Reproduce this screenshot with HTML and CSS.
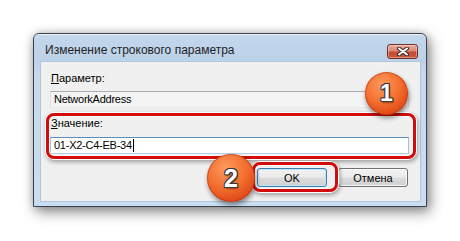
FILE: index.html
```html
<!DOCTYPE html>
<html lang="ru">
<head>
<meta charset="utf-8">
<title>Изменение строкового параметра</title>
<link rel="stylesheet" href="styles.css">
</head>
<body>
<div class="window">
  <div class="titlebar">
    <span class="title">Изменение строкового параметра</span>
    <button class="close" aria-label="Закрыть">
      <svg width="12" height="9" viewBox="0 0 12 9">
        <path d="M2 1.5 L10 7.5 M10 1.5 L2 7.5" stroke="#3b2a28" stroke-width="4" stroke-linecap="round"/>
        <path d="M2 1.5 L10 7.5 M10 1.5 L2 7.5" stroke="#ffffff" stroke-width="2" stroke-linecap="round"/>
      </svg>
    </button>
  </div>
  <div class="content">
    <div class="label"><u>П</u>араметр:</div>
    <div class="field readonly">NetworkAddress</div>
    <div class="label label2"><u>З</u>начение:</div>
    <div class="field edit">01-X2-C4-EB-34<span class="caret"></span></div>
    <div class="buttons">
      <button class="btn default">OK</button>
      <button class="btn">Отмена</button>
    </div>
  </div>
  <div class="mark frame1"></div>
  <div class="mark frame2"></div>
  <div class="badge badge1">1</div>
  <div class="badge badge2">2</div>
</div>
</body>
</html>
```

FILE: styles.css
```css
html, body {
  margin: 0;
  padding: 0;
  background: #ffffff;
}
body {
  width: 460px;
  height: 241px;
  overflow: hidden;
  font-family: "Liberation Sans", Arial, sans-serif;
}
.window {
  position: relative;
  box-sizing: border-box;
  margin: 33px 0 0 33px;
  width: 394px;
  height: 174px;
  border: 1px solid #39424d;
  border-radius: 6px 6px 0 0;
  padding: 0 6px 5px 7px;
  background: linear-gradient(#c3d7ec 0px, #bcd2e9 26px, #c6daee 40px, #cadef1 100%);
  box-shadow: 3px 5px 14px rgba(0,0,0,0.45), 0 0 8px rgba(0,0,0,0.18), inset 0 1px 0 rgba(255,255,255,0.7);
  display: flex;
  flex-direction: column;
}
.titlebar {
  height: 28px;
  box-sizing: border-box;
  padding: 9px 2px 0 4px;
  display: flex;
  justify-content: space-between;
  align-items: flex-start;
}
.title {
  font-size: 12px;
  line-height: 15px;
  color: #1e1e1e;
}
.close {
  margin-top: 1px;
  width: 31px;
  height: 15px;
  padding: 0;
  border: 1px solid #6e3228;
  border-radius: 3px;
  background: linear-gradient(#e9a99c 0%, #dc8a78 45%, #c54a32 55%, #c9573c 100%);
  box-shadow: inset 0 0 0 1px rgba(255,255,255,0.35);
  display: flex;
  align-items: center;
  justify-content: center;
}
.close svg { display: block; }
.content {
  flex: 1;
  background: #f0f0f0;
  box-shadow: 0 0 0 1px #b2c6db;
  padding: 9px 11px 0 9px;
  display: flex;
  flex-direction: column;
  font-size: 11px;
  color: #000;
}
.label {
  height: 15px;
  line-height: 15px;
  padding-left: 1px;
}
.label u { text-decoration: underline; text-underline-offset: 1px; }
.field {
  box-sizing: border-box;
  margin-top: 5px;
  height: 17px;
  line-height: 15px;
  padding-left: 3px;
  letter-spacing: -0.25px;
  border: 1px solid;
  display: flex;
  align-items: center;
}
.readonly {
  background: #f3f3f3;
  border-color: #abadb3 #dcdfe5 #e3e9ef #dcdfe5;
}
.label2 { margin-top: 8px; }
.edit {
  margin-top: 6px;
  background: #ffffff;
  border-color: #5b8dbc #a4c0da #b9d1e6 #a4c0da;
}
.caret {
  display: inline-block;
  width: 1px;
  height: 13px;
  background: #000;
  margin-left: 1px;
}
.buttons {
  margin-top: 14px;
  display: flex;
  justify-content: flex-end;
  gap: 11px;
  padding-right: 1px;
}
.btn {
  width: 70px;
  height: 19px;
  padding: 0;
  font-family: "Liberation Sans", Arial, sans-serif;
  font-size: 11px;
  color: #000;
  border: 1px solid #707070;
  border-radius: 3px;
  background: linear-gradient(#f2f2f2 0%, #ebebeb 48%, #dddddd 52%, #cfcfcf 100%);
  box-shadow: inset 0 0 0 1px rgba(255,255,255,0.8);
}
.btn.default {
  border-color: #3c7fb1;
  box-shadow: inset 0 0 0 1px #c4e5f6;
}
.mark {
  position: absolute;
  box-sizing: border-box;
  border: 3px solid #d20c0c;
  border-radius: 8px;
  box-shadow: inset 0 0 0 1px rgba(255,255,255,0.85), 0 0 0 1px #ffffff, 1px 2px 4px 1px rgba(0,0,0,0.35);
}
.frame1 {
  left: 12px;
  top: 79px;
  width: 370px;
  height: 46px;
}
.frame2 {
  left: 218px;
  top: 128px;
  width: 86px;
  height: 30px;
}
.badge {
  position: absolute;
  border-radius: 50%;
  background: radial-gradient(circle at 40% 30%, #fb9a5e 0%, #f4702f 45%, #dc4416 80%, #c83a12 100%);
  box-shadow: 1px 3px 5px rgba(0,0,0,0.45), inset 0 0 0 1px rgba(180,40,10,0.5);
  color: #ffffff;
  font-family: "Liberation Sans", Arial, sans-serif;
  font-weight: bold;
  display: flex;
  align-items: center;
  justify-content: center;
  text-shadow: 1px 0 0 #3a3a3a, -1px 0 0 #3a3a3a, 0 1px 0 #3a3a3a, 0 -1px 0 #3a3a3a, 1px 1px 0 #3a3a3a, -1px -1px 0 #3a3a3a, 1px -1px 0 #3a3a3a, -1px 1px 0 #3a3a3a, 1px 2px 2px rgba(0,0,0,0.4);
}
.badge1 {
  left: 331px;
  top: 38px;
  width: 43px;
  height: 43px;
  font-size: 23px;
}
.badge2 {
  left: 173px;
  top: 120px;
  width: 48px;
  height: 48px;
  font-size: 25px;
}
```
